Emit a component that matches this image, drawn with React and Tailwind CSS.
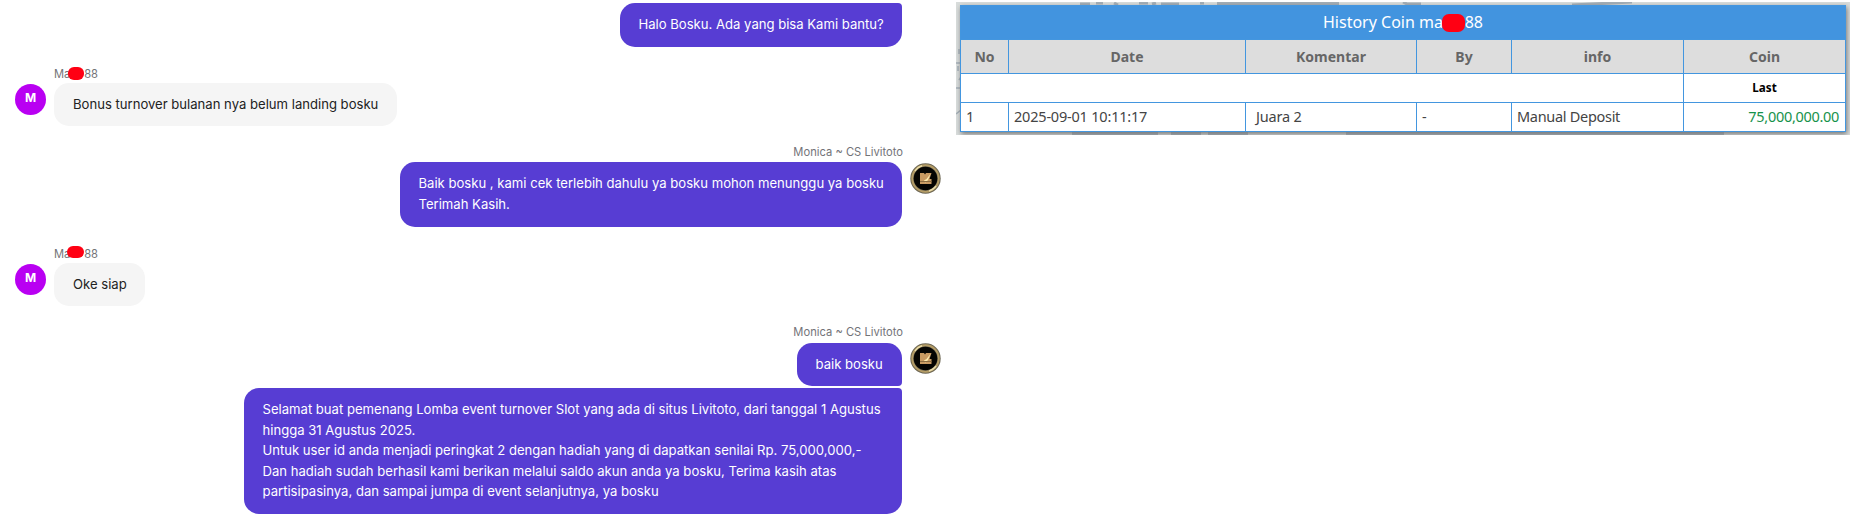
const chat = "font-['Inter',sans-serif]";

function Mark({ className }) {
  return <span className={`absolute bg-[#ff0013] ${className}`} />;
}

function UserMsg({ text, width, className, mark }) {
  return (
    <div className={`flex items-start ${className}`}>
      <div className="mt-[17px] ml-[15px] flex size-[31px] shrink-0 items-center justify-center rounded-full bg-[#b900f2] pb-[3px] text-[12px] font-bold text-white">M</div>
      <div className="ml-2">
        <div className="relative flex h-4 w-[44px] items-center justify-between text-[11.2px] leading-4 text-[#737378]">
          <span className="-mt-[2px]">Ma</span><span className="-mt-[2px]">88</span>
          <Mark className={mark} />
        </div>
        <div className={`flex h-[43px] items-center rounded-[15px] bg-[#f5f5f5] pl-[19px] text-[13.1px] whitespace-nowrap text-[#222] ${width}`}>
          {text}
        </div>
      </div>
    </div>
  );
}

function Coin({ className }) {
  return (
    <svg className={`ml-2 size-[31px] shrink-0 ${className}`} viewBox="0 0 31 31">
      <circle cx="15.5" cy="15.5" r="15.2" fill="#6b6552" />
      <circle cx="15.5" cy="15.5" r="13.2" fill="none" stroke="#b49c66" strokeWidth="2" />
      <path d="M5 8A13 13 0 0 1 12 2.800M26 23a13 13 0 0 1-7 5" fill="none" stroke="#eadca8" strokeWidth="1.500" />
      <circle cx="15.5" cy="15.5" r="11.8" fill="#050402" />
      <path d="M10 10h4l1 1.500 1-1.500h5.500l-2 6h2V21H10z" fill="#c99a62" />
      <path d="M14 17.500l2.500-1.500 4-5-2.500 6-2.500 2.500z" fill="#ffedb0" />
      <path d="M10 18.500h11.500" stroke="#8a6b40" strokeWidth="1" />
    </svg>
  );
}

function AgentRow({ children, avatar, avatarClass = "" }) {
  return (
    <div className="flex w-[941px] items-start">
      <div className="flex flex-1 justify-end">{children}</div>
      {avatar ? <Coin className={avatarClass} /> : <div className="w-[39px] shrink-0" />}
    </div>
  );
}

const bubble = "bg-[#573dd3] pl-[18.5px] text-[13.1px] leading-[20.5px] whitespace-nowrap text-white";

function AgentName({ className }) {
  return <div className={`h-4 w-[903px] text-right text-[11.2px] leading-[15px] text-[#737378] ${className}`}>Monica ~ CS Livitoto</div>;
}

const th = "border border-[#4396df] bg-[#ddd] p-0 text-[14px] font-bold text-[#666]";
const cell = "border border-[#4396df] py-0 text-[14.5px]";
const td = `${cell} px-[5px] tracking-[-0.2px] text-[#444]`;

function History() {
  return (
    <div className="relative mt-[2px] h-[133px] w-[894px] overflow-hidden bg-[#d9dddc]">
      <svg className="absolute inset-0" width="894" height="133" fill="none" stroke="#a2adb6">
        <path d="M124 2h10M140 1h7M158 1l4 2M183 1h9M196 2l4-1M205 2h18M244 1h4M261 1.500h122M447 0l4 2h14M616 3l60-3" strokeWidth="3" />
        <path d="M116 131.500h86M215 131.500h30M252 131.500h40M390 131.500h378" strokeWidth="3" />
        <path d="M0 61h5M3 47v5M0 86h5M0 112l5-4M2 64v5M3 78l2-3" strokeWidth="1.500" />
      </svg>
      <table className="relative mt-[3px] ml-1 w-[885px] table-fixed border-collapse bg-white font-['Noto_Sans',sans-serif] shadow-[1px_2px_5px_#777]">
        <colgroup>
          <col className="w-[48px]" /><col className="w-[237px]" /><col className="w-[171px]" /><col className="w-[95px]" /><col className="w-[172px]" /><col className="w-[162px]" />
        </colgroup>
        <tbody>
          <tr className="h-[34px]">
            <th colSpan="6" className="border border-[#4396df] bg-[#4294df] p-0 text-[16px] font-normal text-white">
              <span className="relative -top-px inline-flex w-[160px] justify-between"><span>History Coin ma</span><span>88</span><Mark className="top-[4px] left-[119px] h-[18px] w-[23px] rounded-[7px]" /></span>
            </th>
          </tr>
          <tr className="h-[34px]">
            {["No", "Date", "Komentar", "By", "info", "Coin"].map((h) => <th key={h} className={th}>{h}</th>)}
          </tr>
          <tr className="h-[29px]">
            <td colSpan="5" className={td}></td>
            <td className="border border-[#4396df] p-0 pb-px text-center text-[11.7px] font-bold text-black">Last</td>
          </tr>
          <tr className="h-[29px]">
            <td className={td}>1</td>
            <td className={td}>2025-09-01 10:11:17</td>
            <td className={`${cell} pl-[10px] tracking-[-0.2px] text-[#444]`}>Juara 2</td>
            <td className={td}>-</td>
            <td className={`${cell} px-[5px] tracking-[-0.3px] text-[#444]`}>Manual Deposit</td>
            <td className={`${cell} pr-[6px] text-right tracking-[-0.3px] text-[#16924b]`}>75,000,000.00</td>
          </tr>
        </tbody>
      </table>
    </div>
  );
}

export default function App() {
  return (
    <div className="flex h-[526px] w-[1850px] items-start overflow-hidden bg-white">
      <div className={`h-[526px] w-[956px] shrink-0 pt-[3px] ${chat}`}>
        <AgentRow>
          <div className={`flex h-[44px] w-[282px] items-center rounded-[15px] rounded-tr-[4px] pb-px ${bubble}`}>Halo Bosku. Ada yang bisa Kami bantu?</div>
        </AgentRow>
        <UserMsg className="mt-[20px]" text="Bonus turnover bulanan nya belum landing bosku" width="w-[343px]" mark="top-0 left-[14px] h-[13px] w-4 rounded-[6px]" />
        <AgentName className="mt-[19px]" />
        <div className="mt-px">
          <AgentRow avatar avatarClass="mt-px">
            <div className={`h-[65px] w-[502px] rounded-[15px] pt-[11px] ${bubble}`}>Baik bosku , kami cek terlebih dahulu ya bosku mohon menunggu ya bosku<br />Terimah Kasih.</div>
          </AgentRow>
        </div>
        <UserMsg className="mt-[20px]" text="Oke siap" width="w-[91px]" mark="-top-px left-[13px] h-3 w-[17px] rounded-[6px]" />
        <AgentName className="mt-[19px]" />
        <div className="mt-[2px]">
          <AgentRow avatar>
            <div className={`flex h-[43px] w-[105px] items-center rounded-[15px] rounded-br-[4px] pb-px ${bubble}`}>baik bosku</div>
          </AgentRow>
        </div>
        <div className="mt-[2px]">
          <AgentRow>
            <div className={`h-[126px] w-[658px] rounded-[15px] rounded-tr-[4px] pt-[11px] ${bubble}`}>
              Selamat buat pemenang Lomba event turnover Slot yang ada di situs Livitoto, dari tanggal 1 Agustus<br />
              hingga 31 Agustus 2025.<br />
              Untuk user id anda menjadi peringkat 2 dengan hadiah yang di dapatkan senilai Rp. 75,000,000,-<br />
              Dan hadiah sudah berhasil kami berikan melalui saldo akun anda ya bosku, Terima kasih atas<br />
              partisipasinya, dan sampai jumpa di event selanjutnya, ya bosku
            </div>
          </AgentRow>
        </div>
      </div>
      <History />
    </div>
  );
}
